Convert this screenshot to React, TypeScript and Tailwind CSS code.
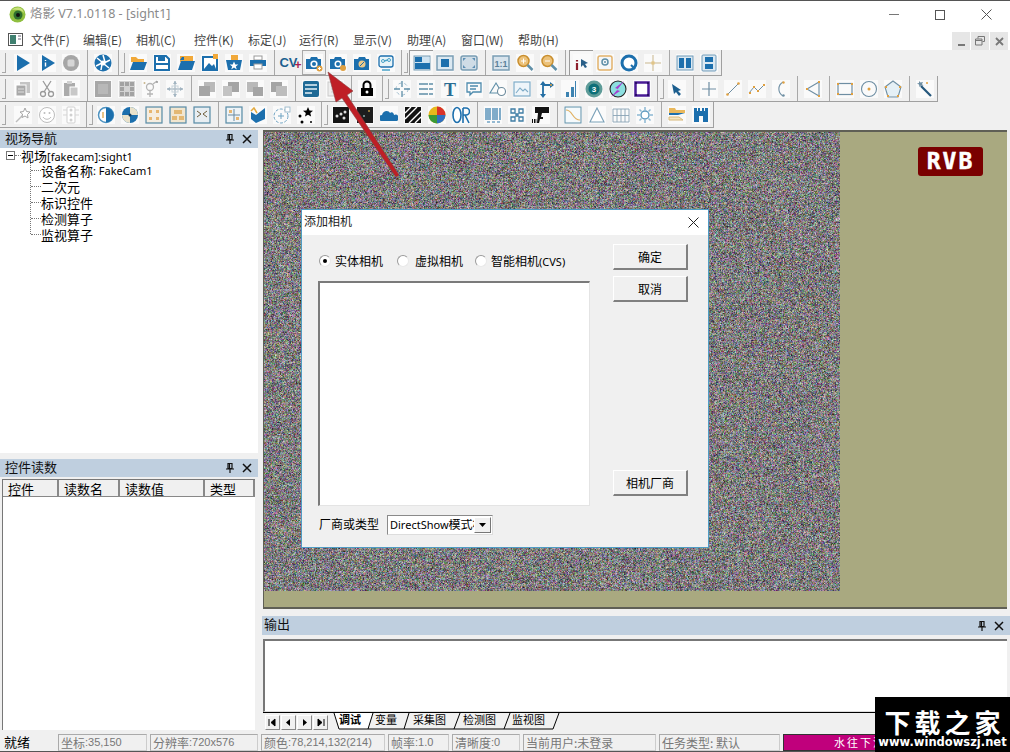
import { useEffect, useRef, type ReactNode } from "react";

const B = "#1c6fad";
const G = "#a6a6a6";
const T = "#5f8fa8";
const O = "#e0a040";

// toolbar glyphs, 18x18 box
const icons: Record<string, ReactNode> = {
  play: <path d="M3 1l13 8-13 8z" fill={B} />,
  step: <><path d="M4 1l13 8-13 8z" fill={B} /><path d="M7.500 6v1M7.500 8.500v4" stroke="#fff" strokeWidth="1.400" /></>,
  stop: <><circle cx="9" cy="9" r="8" fill={G} /><rect x="5.500" y="5.500" width="7" height="7" rx="1.500" fill="#d6d6d6" /></>,
  aperture: <><circle cx="9" cy="9" r="8.500" fill={B} /><path d="M9 1l2 7M16 6l-6 3M15 14l-5-4M7 16l1-6M2 12l6-3M3 4l5 4" stroke="#fff" strokeWidth="1.500" /><circle cx="9" cy="9" r="2.500" fill="#fff" /></>,
  open: <><path d="M2 3h5l2 2h6v3H2z" fill="#f1a93a" /><path d="M1 16l3-8h14l-3 8z" fill={B} /></>,
  save: <><path d="M2 2h11l3 3v11H2z" fill="#fff" stroke={B} strokeWidth="2" /><rect x="5" y="2" width="7" height="5" fill={B} /><rect x="1" y="9" width="15" height="2" fill={B} /></>,
  folder: <><path d="M3 2h13v6H3z" fill="#f1a93a" /><path d="M1 16l3-9h14l-3 9z" fill={B} /><path d="M3 6l2-3h2v3z" fill={B} /></>,
  picture: <><rect x="2" y="3" width="14" height="13" fill="#fff" stroke={B} strokeWidth="2" /><path d="M3 15l5-6 3 3 2-2 2 5z" fill={B} /><rect x="12" y="0" width="5" height="5" fill="#f1a93a" /></>,
  starbox: <><path d="M6 1h7v5H6z" fill="#f1a93a" /><path d="M1 6h16l-2 10H3z" fill={B} /><path d="M9 7.500l1.300 3h3l-2.500 2 1 3-2.800-2-2.800 2 1-3-2.500-2h3z" fill="#fff" /></>,
  print: <><rect x="5" y="2" width="8" height="4" fill="#fff" stroke="#999" /><rect x="1" y="6" width="16" height="6" fill={B} /><rect x="5" y="10" width="8" height="5" fill="#fff" stroke="#999" /></>,
  camplus: <><path d="M1 5h4l1-2h6l1 2h3v10H1z" fill={B} /><circle cx="9" cy="10" r="3.600" fill="#fff" /><circle cx="9" cy="10" r="2" fill={B} /><circle cx="14.500" cy="14.500" r="3" fill={O} /><path d="M13 14.500h3M14.500 13v3" stroke="#fff" /></>,
  camera: <><path d="M1 5h4l1-2h6l1 2h3v10H1z" fill={B} /><circle cx="9" cy="10" r="3.500" fill="#fff" /><circle cx="9" cy="10" r="2" fill={B} /><circle cx="14" cy="14" r="3" fill={O} /></>,
  camera2: <><path d="M1 5h4l1-2h6l1 2h3v11H1z" fill={B} /><circle cx="9" cy="10" r="3.500" fill="#ecc98a" /><path d="M7 12l4-4" stroke={B} /></>,
  camnet: <><rect x="2" y="2" width="14" height="11" rx="2" fill="#e8f4f8" stroke={B} strokeWidth="1.300" /><circle cx="6" cy="7" r="1.500" fill="none" stroke="#4aa3c8" /><circle cx="12" cy="6" r="1.500" fill="none" stroke="#4aa3c8" /><path d="M7 7l4-1M5 16h8" stroke="#4aa3c8" strokeWidth="1.300" /></>,
  layout1: <><rect x="1" y="2" width="16" height="14" fill="#cfe3f1" stroke="#7a9db4" /><path d="M2 8h7V3H2zM2 9h15v6H2z" fill={B} /><rect x="9" y="3" width="7.500" height="5.500" fill="#cfe3f1" /></>,
  layout2: <><rect x="1" y="2" width="16" height="14" fill="#dbe8f1" stroke="#7a9db4" strokeWidth="1.500" /><rect x="5" y="5" width="8" height="8" fill={B} /></>,
  layout3: <><rect x="1" y="2" width="16" height="14" rx="2" fill="#cfdce6" stroke="#7a9db4" strokeWidth="1.500" /><path d="M3 4h3L3 7zM15 4v3l-3-3zM3 14v-3l3 3zM15 14h-3l3-3z" fill="#5d8fb5" /></>,
  one: <><rect x="1" y="2" width="16" height="14" fill="#d7e3ec" stroke="#7a9db4" strokeWidth="1.500" /><text x="9" y="12.500" fontSize="9" fontWeight="700" textAnchor="middle" fill="#5b7f99" fontFamily="Liberation Sans">1:1</text></>,
  zin: <><circle cx="7.500" cy="7" r="5.500" fill="#ecc27a" stroke="#c98f2f" strokeWidth="1.500" /><path d="M5 7h5M7.500 4.500v5" stroke="#fff" /><path d="M11.500 11l5 5" stroke="#5f8fa8" strokeWidth="2.500" /></>,
  zout: <><circle cx="7.500" cy="7" r="5.500" fill="#ecc27a" stroke="#c98f2f" strokeWidth="1.500" /><path d="M5 7h5" stroke="#fff" /><path d="M11.500 11l5 5" stroke="#5f8fa8" strokeWidth="2.500" /></>,
  ipoint: <><path d="M4 6v1.500M4 9v7" stroke="#8e1f2c" strokeWidth="2.200" /><path d="M8 5l7 4-3 1 2 3-2 1-2-3-2 2z" fill="#2a5f88" /></>,
  target: <><rect x="2" y="2" width="14" height="14" rx="2" fill="#f4f7f9" stroke="#e2b26b" strokeWidth="1.500" /><circle cx="9" cy="8" r="3" fill="none" stroke={T} strokeWidth="1.500" /><circle cx="9" cy="8" r="1" fill={T} /></>,
  qcircle: <><circle cx="9" cy="9" r="7" fill="#fff" stroke={B} strokeWidth="3" /><path d="M11 11l4 4" stroke={B} strokeWidth="2" /></>,
  crosshair: <><circle cx="9" cy="9" r="2" fill="#e0c48a" /><path d="M9 1v6M9 11v6M1 9h6M11 9h6" stroke="#c9b78e" /></>,
  split1: <><rect x="1" y="2" width="16" height="14" fill="#dbe8f1" stroke="#6f9ab8" /><path d="M3 4h5v10H3zM10 4h5v10h-5z" fill={B} /></>,
  split2: <><rect x="2" y="1" width="14" height="16" rx="1" fill="#dbe8f1" stroke="#6f9ab8" /><path d="M5 3h8v5H5zM5 10h8v5H5z" fill={B} /></>,
  copy: <><rect x="6" y="2" width="10" height="11" fill="#c4c4c4" /><rect x="2" y="5" width="10" height="11" fill="#a9a9a9" stroke="#fff" /><path d="M4 9h6M4 12h6" stroke="#ddd" /></>,
  cut: <><circle cx="5" cy="14" r="2.500" fill="none" stroke="#9a9a9a" strokeWidth="1.300" /><circle cx="13" cy="14" r="2.500" fill="none" stroke="#9a9a9a" strokeWidth="1.300" /><path d="M6 12l7-11M12 12L5 1" stroke="#9a9a9a" strokeWidth="1.300" /></>,
  paste: <><rect x="2" y="3" width="11" height="13" fill="#ababab" /><rect x="5" y="1" width="5" height="3" fill="#d0d0d0" /><rect x="8" y="7" width="8" height="9" fill="#c8c8c8" stroke="#fff" /></>,
  square: <><rect x="1" y="1" width="16" height="16" fill="#a8a8a8" /><rect x="4" y="4" width="10" height="10" fill="#b8b8b8" /></>,
  dots: <><rect x="1" y="1" width="16" height="16" fill="#d3d3d3" /><path d="M2 2h4v4H2zM7 2h4v4H7zM12 2h4v4h-4zM2 7h4v4H2zM12 7h4v4h-4zM2 12h4v4H2zM7 12h4v4H7zM12 12h4v4h-4z" fill="#a2a2a2" /></>,
  gender: <><circle cx="8" cy="7" r="3.500" fill="none" stroke="#b5b5b5" strokeWidth="1.300" /><path d="M8 11v6M5 14h6M11 4l4-3" stroke="#b5b5b5" strokeWidth="1.300" /><circle cx="2.500" cy="3" r="1" fill="#c9b78e" /><circle cx="15" cy="2" r="1" fill="#999" /></>,
  move: <><path d="M9 1v16M1 9h16" stroke="#adbcc6" strokeWidth="1.300" /><path d="M9 1L7 4h4zM9 17l-2-3h4zM1 9l3-2v4zM17 9l-3-2v4z" fill="#a2b4c1" /><rect x="6" y="6" width="6" height="6" fill="none" stroke="#c8d3da" /></>,
  stack1: <><rect x="6" y="2" width="11" height="10" fill="#b9b9b9" /><rect x="1" y="6" width="11" height="10" fill="#a5a5a5" /></>,
  stack2: <><rect x="6" y="2" width="11" height="10" fill="#a5a5a5" /><rect x="1" y="6" width="9" height="10" fill="#c3c3c3" /></>,
  stack3: <><rect x="1" y="2" width="11" height="10" fill="#b9b9b9" /><rect x="7" y="7" width="10" height="9" fill="#a5a5a5" /></>,
  stack4: <><rect x="1" y="2" width="11" height="10" fill="#a5a5a5" /><rect x="6" y="6" width="11" height="10" fill="#bdbdbd" /></>,
  list: <><rect x="1" y="1" width="16" height="16" rx="2" fill="#1f6a96" /><path d="M3 5h12M3 9h12M3 13h7" stroke="#e8f2f7" strokeWidth="1.300" /></>,
  faint: <><rect x="2" y="2" width="14" height="14" fill="#eee" stroke="#c9c9c9" /><path d="M5 6h8M5 9h8M5 12h8" stroke="#cfcfcf" /></>,
  lock: <><path d="M5.500 8V5a3.500 3.500 0 0 1 7 0v3" fill="none" stroke="#000" strokeWidth="2" /><rect x="3" y="8" width="12" height="8" fill="#000" /><circle cx="9" cy="12" r="1.500" fill="#fff" /></>,
  cross: <><circle cx="9" cy="9" r="6" fill="none" stroke="#9fbccd" strokeDasharray="3 3" /><path d="M9 1v6M9 11v6M1 9h6M11 9h6" stroke={T} strokeWidth="1.300" /></>,
  lines: <path d="M2 4h14M2 9h14M2 14h14" stroke={T} strokeWidth="1.500" strokeDasharray="9 1 4 0" />,
  tee: <text x="9" y="15.500" fontSize="18" fontWeight="700" textAnchor="middle" fill="#2a6c93" fontFamily="Liberation Serif">T</text>,
  comment: <path d="M2 3h14v9H8l-3 3v-3H2zM5 6h8M5 9h6" fill="none" stroke="#4f8cae" strokeWidth="1.300" />,
  shapes: <><path d="M7 3l6 10H1z" fill="none" stroke={T} strokeWidth="1.100" /><circle cx="12.500" cy="11.500" r="4" fill="#fff" stroke="#6c8a9c" strokeWidth="1.100" /></>,
  image: <><rect x="1" y="2" width="16" height="14" fill="#eef5fa" stroke="#7facc8" strokeWidth="1.200" /><path d="M3 13l4-5 3 3 2-2 3 3" fill="none" stroke="#7facc8" strokeWidth="1.100" /></>,
  axes: <><path d="M6 3v13M6 5h10" stroke="#246fa4" strokeWidth="1.800" /><path d="M6 1L3 5h6zM6 18l-3-4h6zM17 5l-4-3v6z" fill="#246fa4" /><circle cx="14" cy="5" r="1" fill={O} /></>,
  bars: <path d="M5 12h3v5H5zM10 7h3v10h-3zM14 1h1v16h-1z" fill="#3d83b1" />,
  teal: <><circle cx="9" cy="9" r="8.500" fill="#5e9b98" /><circle cx="9" cy="9" r="5.500" fill="#0c6f78" /><text x="9" y="12" fontSize="8" fontWeight="700" textAnchor="middle" fill="#fff" fontFamily="Liberation Sans">3</text></>,
  bolt: <><circle cx="9" cy="9" r="8" fill="#8ddfe0" stroke="#222" strokeWidth="1.100" /><path d="M15 1L6 8l3 1-7 8 9-6-3-1z" fill="#a53fd0" /></>,
  purple: <><rect x="2.500" y="2.500" width="13" height="13" fill="#fff" stroke="#4a1b96" strokeWidth="2.500" /><path d="M2 2h2v2H2zM14 2h2v2h-2zM2 14h2v2H2zM14 14h2v2h-2z" fill="#2a0d66" /></>,
  pointer: <path d="M4 4l9 6-3 1 3 3-2 2-3-4-2 2z" fill="#1d5f8f" />,
  plus: <path d="M9 2v14M2 9h14" stroke="#6e8ea3" strokeWidth="1.200" />,
  line: <><path d="M3 15L15 3" stroke="#6e8ea3" /><circle cx="3.500" cy="14.500" r="1.300" fill={O} /><circle cx="14.500" cy="3.500" r="1.300" fill={O} /></>,
  poly: <><path d="M1 13l5-6 4 4 6-6" fill="none" stroke="#6e8ea3" /><path d="M1 12h2v2H1zM5 6h2v2H5zM9 10h2v2H9zM15 4h2v2h-2z" fill={O} /></>,
  arc: <><path d="M11 2a8 8 0 0 0 0 14" fill="none" stroke="#6e8ea3" strokeWidth="1.100" /><circle cx="11.500" cy="2.500" r="1.200" fill={O} /><circle cx="11.500" cy="15.500" r="1.200" fill="#6e8ea3" /></>,
  fan: <><path d="M15 2v14L3 9z" fill="none" stroke="#6e8ea3" strokeWidth="1.100" /><path d="M2 8h2v2H2zM14 1h2v2h-2zM14 15h2v2h-2z" fill={O} /></>,
  rect: <><rect x="2" y="3.500" width="14" height="11" fill="none" stroke="#6e8ea3" strokeWidth="1.200" /><path d="M1 3h2v2H1zM15 3h2v2h-2zM1 13h2v2H1zM15 13h2v2h-2z" fill={O} /></>,
  circle: <><circle cx="9" cy="9" r="7.500" fill="none" stroke="#6e8ea3" strokeWidth="1.100" /><circle cx="9" cy="9" r="1.500" fill={O} /></>,
  penta: <><path d="M9 1l8 6-3 10H4L1 7z" fill="#e5f0f6" stroke="#6e8ea3" strokeWidth="1.100" /><path d="M1 6h2v2H1zM15 6h2v2h-2zM3 15h2v2H3zM13 15h2v2h-2z" fill={O} /></>,
  wand: <><path d="M5 6l10 10" stroke="#25577c" strokeWidth="2.200" /><path d="M3 1l1.500 1.500L7 2 6 4l1.500 2-2.500-.5L3.500 7 3 4.500 1 3.500 3 3z" fill="#6e8ea3" /><circle cx="11" cy="3" r="1" fill={O} /></>,
  shoot: <><path d="M2 16l7-7" stroke="#bdbdbd" strokeWidth="1.400" /><path d="M11 2l1.500 3.500L16 6l-2.500 2.500.5 3.500-3-2-3 1.500.5-3.500L6 6l3.500-.5z" fill="#fff" stroke="#a5a5a5" /></>,
  smile: <><circle cx="9" cy="9" r="7.500" fill="#fff" stroke="#bdbdbd" /><circle cx="6.500" cy="7" r="1" fill="#bdbdbd" /><circle cx="11.500" cy="7" r="1" fill="#bdbdbd" /><path d="M5 11c2 3 6 3 8 0" fill="none" stroke="#bdbdbd" /></>,
  traffic: <><rect x="5" y="1" width="8" height="16" rx="1" fill="#fff" stroke="#cfcfcf" /><circle cx="9" cy="4" r="1.500" fill="#d0d0d0" /><circle cx="9" cy="9" r="1.500" fill="#d0d0d0" /><circle cx="9" cy="14" r="1.500" fill="#d0d0d0" /><path d="M1 4h4M1 9h4M13 4h4M13 9h4" stroke="#d5d5d5" /></>,
  half: <><circle cx="9" cy="9" r="7.500" fill="#fff" stroke="#4d92c0" strokeWidth="1.500" /><path d="M9 1.500a7.500 7.500 0 0 1 0 15z" fill={B} /><path d="M6 6v6" stroke="#e0b060" strokeWidth="1.500" /></>,
  quad: <><circle cx="9" cy="9" r="8" fill={B} /><path d="M9 1a8 8 0 0 1 8 8H9zM9 17a8 8 0 0 1-8-8h8z" fill="#e9e2cb" /><circle cx="9" cy="9" r="1.500" fill="#163f60" /></>,
  tile1: <><rect x="1" y="1" width="16" height="16" fill="#f5ede0" stroke="#5f8fa8" strokeWidth="1.300" /><path d="M4 4h3v3H4zM11 4h3v3h-3zM4 11h3v3H4zM11 11h3v3h-3z" fill="#e7b670" /></>,
  tile2: <><rect x="1" y="1" width="16" height="16" fill="#f2e6cf" stroke="#5f8fa8" strokeWidth="1.300" /><path d="M5 4h8v4H5zM3 10h5v4H3zM10 10h5v4h-5z" fill="#e3b873" /></>,
  tile3: <><rect x="1" y="1" width="16" height="16" fill="#e8eef2" stroke="#5f8fa8" strokeWidth="1.300" /><path d="M4 5l4 3-4 3M14 5l-4 3 4 3" fill="none" stroke="#6d5c3a" /></>,
  tile4: <><rect x="1" y="1" width="16" height="16" fill="#eef3f6" stroke="#5f8fa8" strokeWidth="1.300" /><path d="M9 3v12M3 9h12" stroke="#6a8ba1" /><path d="M4 4h3v3H4zM11 11h3v3h-3z" fill="#e7b670" /></>,
  fold: <><path d="M2 6l5 3 9-7v11l-9 4-5-4z" fill={B} /><path d="M2 5l3-3 3 5" fill="none" stroke="#e2a93f" strokeWidth="1.500" /></>,
  orbit: <><circle cx="8" cy="10" r="7" fill="none" stroke="#6fa3c2" strokeDasharray="3 1.500" /><path d="M8 7v6M5 10h6" stroke="#6fa3c2" /><rect x="12" y="1" width="5" height="5" fill="#fff" stroke="#9db9ca" /></>,
  stars: <><path d="M11 1l1.500 3.500 3.500.3-2.700 2.300.8 3.400-3.100-1.800-3 1.800.8-3.400L6 4.800l3.500-.3z" fill="#000" /><circle cx="3" cy="10" r="1.500" fill="#000" /><circle cx="5" cy="16" r="1.500" fill="#000" /><circle cx="14" cy="16" r="1" fill="#000" /></>,
  dark1: <><rect x="1" y="1" width="16" height="16" fill="#141414" /><circle cx="5" cy="10" r="1.500" fill="#ddd" /><circle cx="9" cy="8" r="1.500" fill="#ddd" /><circle cx="13" cy="6" r="1.500" fill="#ddd" /><circle cx="12" cy="12" r="1.500" fill="#ddd" /></>,
  dark2: <><rect x="1" y="1" width="16" height="16" fill="#1d1d1d" /><circle cx="13" cy="5" r="1" fill="#b7953f" /><circle cx="8" cy="10" r="1" fill="#8aa" /></>,
  cloud: <path d="M2 15a3 3 0 0 1 0-6c1-5 7-5 8-2 2-2 4 0 4 2a3 3 0 0 1 3 6z" fill={B} />,
  hatch: <><rect x="1" y="1" width="16" height="16" fill="#111" /><path d="M1 7l6-6M1 13L13 1M5 17L17 5M11 17l6-6" stroke="#fff" strokeWidth="1.400" /></>,
  pie: <><circle cx="9" cy="9" r="8.500" fill="#e6b81d" /><path d="M9 9V.5A8.500 8.500 0 0 1 17.500 9z" fill="#d8322a" /><path d="M9 9h8.500A8.500 8.500 0 0 1 9 17.500z" fill="#2f6fc0" /><path d="M9 9v8.500A8.500 8.500 0 0 1 .5 9z" fill="#3b9a35" /></>,
  orand: <><ellipse cx="5" cy="9" rx="4" ry="7.500" fill="#fff" stroke={B} strokeWidth="1.600" /><path d="M11 2v15M11 2h3a3 3 0 0 1 0 7h-3M13 9l4 8" fill="none" stroke={B} strokeWidth="1.600" /></>,
  barcode: <path d="M2 2v12M4 2v12M6 2v12M9 2v12M11 2v12M13 2v12M16 2v12M3 16h3M8 16h3M13 16h3" stroke="#2f78a9" strokeWidth="1.200" />,
  qr: <path d="M3 3h4v4H3zM11 3h4v4h-4zM3 11h4v4H3zM11 11h4v4h-4zM8 8h2v2H8z" fill="none" stroke="#3f7da5" strokeWidth="1.300" />,
  scanner: <><path d="M3 1h14v6H10l-1 4h2v2H8l-1 4H5l1-10H3z" fill="#111" /><path d="M0 13h1v4H0zM2 13h1v4H2zM3.500 13h.8v4h-.8z" fill="#111" /></>,
  curve: <><rect x="1" y="1" width="16" height="16" fill="#f5fafc" stroke="#5f8fa8" /><path d="M2 4c7 0 6 10 14 10" fill="none" stroke="#e0b060" strokeWidth="1.200" /></>,
  tri: <path d="M9 2l7 14H2z" fill="#fff" stroke="#7aa1b8" strokeWidth="1.100" />,
  gridz: <path d="M1 3h16v13H1zM1 9.500h16M5 3v13M9 3v13M13 3v13" fill="none" stroke="#8aa4b6" strokeWidth=".9" />,
  gear: <><circle cx="9" cy="9" r="4" fill="#fff" stroke="#5f9bc0" strokeWidth="1.400" /><path d="M9 1v3M9 14v3M1 9h3M14 9h3M3.500 3.500l2 2M12.500 12.500l2 2M14.500 3.500l-2 2M5.500 12.500l-2 2" stroke="#8cb8d2" strokeWidth="1.500" /></>,
  ruler: <><path d="M1 2h6l1 2h9v3H1z" fill="#e9b85c" /><path d="M1 7h16l-7 2H1z" fill={B} /><path d="M1 11h10l4 3H1z" fill="#f4e5c2" stroke="#d8b878" /></>,
  castle: <path d="M2 2h3v3h1V2h2v3h2V2h2v3h1V2h3v14H2zM7 10h4v6H7z" fill={B} fillRule="evenodd" />,
};

const row1 = ["play", "step", "stop", "sep", "aperture", "grip", "open", "save", "folder", "picture", "starbox", "print", "sep", "cv", "camplus", "camera", "camera2", "camnet", "grip", "layout1", "layout2", "layout3", "sep", "one", "zin", "zout", "sep", "ipoint", "target", "qcircle", "crosshair", "sep", "split1", "split2"];
const row2 = ["copy", "cut", "paste", "sep", "square", "dots", "gender", "move", "sep", "stack1", "stack2", "stack3", "stack4", "sep", "list", "faint", "sep", "lock", "grip", "cross", "lines", "tee", "comment", "shapes", "image", "axes", "bars", "teal", "bolt", "purple", "grip", "pointer", "sep", "plus", "line", "poly", "arc", "sep", "fan", "sep", "rect", "circle", "penta", "sep", "wand"];
const row3 = ["shoot", "smile", "traffic", "grip", "half", "quad", "tile1", "tile2", "tile3", "sep", "tile4", "fold", "orbit", "stars", "grip", "dark1", "dark2", "cloud", "hatch", "pie", "orand", "sep", "barcode", "qr", "scanner", "sep", "curve", "tri", "gridz", "gear", "sep", "ruler", "castle"];

const menus = [
  ["文件(F)", "w-[52px]"],
  ["编辑(E)", "w-[53px]"],
  ["相机(C)", "w-[58px]"],
  ["控件(K)", "w-[54px]"],
  ["标定(J)", "w-[51px]"],
  ["运行(R)", "w-[54px]"],
  ["显示(V)", "w-[54px]"],
  ["助理(A)", "w-[54px]"],
  ["窗口(W)", "w-[57px]"],
  ["帮助(H)", "w-[50px]"],
];

const Grip = () => (
  <div className="w-[4px] h-[20px] border-r border-b border-[#a8a8a8] shrink-0" />
);

const ToolBar = ({ items }: { items: string[] }) => (
  <div className="flex items-center h-[26px] pl-[2px] border-b border-r border-[#a0a0a0] w-fit">
    <div className="w-[9px] shrink-0"><Grip /></div>
    {items.map((it, i) => {
      if (it === "sep") {
        return (
          <div key={i} className="w-2 h-full flex justify-center shrink-0">
            <div className="w-px h-full bg-[#a8a8a8]" />
          </div>
        );
      }
      if (it === "grip") {
        return (
          <div key={i} className="w-[11px] h-full flex items-center gap-[2px] pl-[3px] shrink-0">
            <div className="w-px h-full bg-[#a8a8a8]" />
            <Grip />
          </div>
        );
      }
      const pressed = it === "layout1" || it === "ipoint";
      const hover = it === "camplus";
      return (
        <div
          key={i}
          className={`w-6 h-full flex items-center justify-center shrink-0 ${
            pressed ? "border-l border-t border-[#9a9a9a] bg-[#f7f7f7]" : ""
          } ${hover ? "border border-[#a8a8a8]" : ""}`}
        >
          {it === "cv" ? (
            <span className="relative text-[13px] leading-none font-['Liberation_Sans',sans-serif] font-bold text-[#1c5f8f] -ml-[3px]">
              CV
              <span className="absolute -right-[4px] -bottom-[2px] text-[12px] leading-none text-[#a81e4e]">+</span>
            </span>
          ) : (
            <svg className="bg-[#fafafa]" width="18" height="18" viewBox="0 0 18 18">{icons[it]}</svg>
          )}
        </div>
      );
    })}
  </div>
);

const PanelHeader = ({ title, textClass }: { title: string; textClass?: string }) => (
  <div className={`flex items-center justify-between bg-[#bfcfdf] text-[13px] text-[#111] pl-[5px] pr-[6px] ${textClass ?? ""}`}>
    <span className="leading-none pb-[4px]">{title}</span>
    <div className="flex items-center gap-[8px]">
      <svg width="8" height="10" viewBox="0 0 8 10">
        <path d="M2 .5h4v5H2zM3.500.5v5M0 6h8M4 6v4" fill="none" stroke="#111" strokeWidth="1.200" />
      </svg>
      <svg width="10" height="10" viewBox="0 0 10 10">
        <path d="M1 1l8 8M9 1L1 9" stroke="#111" strokeWidth="1.500" />
      </svg>
    </div>
  </div>
);

const NoiseView = () => {
  const ref = useRef<HTMLCanvasElement>(null);
  useEffect(() => {
    const ctx = ref.current?.getContext("2d");
    if (!ctx) return;
    const img = ctx.createImageData(720, 576);
    let seed = 12345;
    const rnd = () => {
      seed = (seed * 1664525 + 1013904223) >>> 0;
      return (seed >>> 16) & 255;
    };
    for (let i = 0; i < img.data.length; i += 4) {
      const luma = (rnd() - 128) * 0.5;
      img.data[i] = 126 + luma + (rnd() - 128) * 0.45;
      img.data[i + 1] = 124 + luma + (rnd() - 128) * 0.45;
      img.data[i + 2] = 126 + luma + (rnd() - 128) * 0.45;
      img.data[i + 3] = 255;
    }
    ctx.putImageData(img, 0, 0);
  }, []);
  return <canvas ref={ref} width={720} height={576} className="block w-[576px] h-[459px] blur-[0.5px]" />;
};

const Radio = ({ label, checked, w, gap }: { label: ReactNode; checked?: boolean; w: string; gap: string }) => (
  <div className={`flex items-center ${gap} ${w}`}>
    <span className="w-[12px] h-[12px] rounded-full border border-[#9a9a9a] border-r-[#e8e8e8] border-b-[#e8e8e8] bg-white flex items-center justify-center shrink-0">
      {checked && <span className="w-[4px] h-[4px] rounded-full bg-black" />}
    </span>
    <span className="leading-none whitespace-nowrap">{label}</span>
  </div>
);

const DlgButton = ({ label, primary }: { label: string; primary?: boolean }) => (
  <div
    className={`w-[75px] h-[26px] flex items-center justify-center text-[12px] border border-t-white border-l-white border-r-[#808080] border-b-[#808080] border-b-2 border-r-2 ${
      primary ? "border-t-[#7a7a7a] border-l-[#7a7a7a] border-b-[#555] border-r-[#555]" : ""
    }`}
  >
    {label}
  </div>
);

const statusCells = [
  ["坐标", ":35,150", "w-[89px]"],
  ["分辨率", ":720x576", "w-[108px]"],
  ["颜色", ":78,214,132(214)", "w-[124px]"],
  ["帧率", ":1.0", "w-[61px]"],
  ["清晰度", ":0", "w-[68px]"],
  ["当前用户:未登录", "", "w-[133px]"],
  ["任务类型: 默认", "", "w-[121px]"],
];

const tabs = [
  ["调试", 4],
  ["变量", 40],
  ["采集图", 78],
  ["检测图", 128],
  ["监视图", 177],
] as const;

export default function App() {
  return (
    <div className="relative w-[1010px] h-[752px] overflow-hidden flex flex-col bg-[#f0f0f0] text-black font-['Noto_Sans_CJK_SC','Noto_Sans',sans-serif]">
      {/* title bar */}
      <div className="h-[28px] bg-white border-t border-[#555] flex items-center shrink-0">
        <svg className="ml-[9px]" width="17" height="17" viewBox="0 0 17 17">
          <circle cx="8.500" cy="8.500" r="8" fill="#8fbf3f" />
          <path d="M3 4c4-4 11-3 12 3-2-3-8-4-12-3z" fill="#c8e07a" />
          <circle cx="9" cy="9" r="4.500" fill="#2f6f2f" />
          <circle cx="9" cy="9" r="2" fill="#111" />
        </svg>
        <span className="ml-[4px] text-[12.500px] leading-none text-[#8a8a8a] font-['Noto_Sans','Noto_Sans_CJK_SC',sans-serif]">
          烙影 V7.1.0118 - [sight1]
        </span>
        <div className="ml-auto flex pr-[1px]">
          <div className="w-[46px] h-[27px] flex items-center justify-center">
            <div className="w-[10px] h-px bg-[#777]" />
          </div>
          <div className="w-[46px] h-[27px] flex items-center justify-center">
            <div className="w-[10px] h-[10px] border border-[#555]" />
          </div>
          <div className="w-[46px] h-[27px] flex items-center justify-center">
            <svg width="11" height="11" viewBox="0 0 11 11">
              <path d="M.5.5l10 10M10.500.5l-10 10" stroke="#555" />
            </svg>
          </div>
        </div>
      </div>

      {/* menu bar */}
      <div className="h-[22px] bg-white flex items-center shrink-0">
        <svg className="ml-[8px]" width="15" height="13" viewBox="0 0 15 13">
          <rect x=".5" y=".5" width="14" height="12" fill="#fff" stroke="#555" />
          <rect x="2" y="2" width="6" height="9" fill="#3f7f6f" />
          <path d="M10 3h3M10 6h3" stroke="#667" />
        </svg>
        <div className="ml-[8px] flex text-[12px] text-[#444] pt-[2px]">
          {menus.map(([m, w]) => (
            <span key={m} className={`${w} leading-none`}>{m}</span>
          ))}
        </div>
        <div className="ml-auto mr-[2px] flex gap-px self-end">
          <div className="w-[18px] h-[18px] bg-[#e6e6e6] flex items-end justify-center pb-[4px]">
            <div className="w-[7px] h-[2px] bg-[#777]" />
          </div>
          <div className="w-[18px] h-[18px] bg-[#e6e6e6] flex items-center justify-center">
            <svg width="10" height="10" viewBox="0 0 10 10">
              <path d="M3 2.500V.5h6.500v5H7.500M.5 3h6.500v6H.5zM.5 4.500h6.500" fill="none" stroke="#777" />
            </svg>
          </div>
          <div className="w-[18px] h-[18px] bg-[#e6e6e6] flex items-center justify-center">
            <svg width="9" height="9" viewBox="0 0 9 9">
              <path d="M1 1l7 7M8 1L1 8" stroke="#777" strokeWidth="1.800" />
            </svg>
          </div>
        </div>
      </div>

      {/* tool bars */}
      <div className="flex flex-col shrink-0">
        <ToolBar items={row1} />
        <ToolBar items={row2} />
        <ToolBar items={row3} />
      </div>

      {/* work area */}
      <div className="flex-1 min-h-0 flex pt-[2px]">
        {/* left dock */}
        <div className="w-[258px] shrink-0 flex flex-col">
          <PanelHeader title="视场导航" textClass="h-[18px] shrink-0" />
          <div className="h-[305px] bg-white text-[13px] shrink-0">
            <div className="flex items-center h-[14px] pl-[6px]">
              <span className="w-[9px] h-[9px] border border-[#777] flex items-center justify-center shrink-0">
                <span className="w-[5px] h-px bg-black" />
              </span>
              <span className="w-[6px] border-t border-dotted border-[#777]" />
              <span className="leading-none">
                视场<span className="text-[11px] font-['Noto_Sans',sans-serif]">[fakecam]:sight1</span>
              </span>
            </div>
            <div className="ml-[30px] border-l border-dotted border-[#777] h-[72px]">
              {["设备名称", "二次元", "标识控件", "检测算子", "监视算子"].map((t, i) => (
                <div key={t} className="flex items-center h-[16px]">
                  <span className="w-[10px] border-t border-dotted border-[#777]" />
                  <span className="leading-none">{t}</span>
                  {i === 0 && (
                    <span className="text-[11px] leading-none font-['Noto_Sans',sans-serif]">: FakeCam1</span>
                  )}
                </div>
              ))}
            </div>
          </div>
          <div className="h-[6px] shrink-0" />
          <PanelHeader title="控件读数" textClass="h-[18px] shrink-0" />
          <div className="flex-1 min-h-0 mt-[2px] mb-[2px] ml-[2px] mr-[3px] bg-white border-l border-[#777] flex flex-col">
            <div className="flex h-[18px] text-[13px] bg-[#f0f0f0] border-t border-[#777] shrink-0">
              {[
                ["控件", "w-[56px]"],
                ["读数名", "w-[61px]"],
                ["读数值", "w-[85px]"],
                ["类型", "flex-1"],
              ].map(([t, w]) => (
                <div key={t} className={`${w} pl-[5px] flex items-center leading-none border-r-2 border-b border-[#888]`}>
                  {t}
                </div>
              ))}
            </div>
          </div>
        </div>

        {/* center */}
        <div className="flex-1 min-w-0 flex flex-col pl-[5px]">
          <div className="h-[479px] shrink-0 mr-[3px] bg-[#a9a980] border-t-2 border-l border-b-2 border-[#5f5f55] relative overflow-hidden">
            <NoiseView />
            <div className="absolute left-[654px] top-[15px] w-[65px] h-[29px] rounded-[3px] bg-[#7a0000] flex items-center justify-center text-white font-bold text-[23px] leading-none tracking-[2px] [-webkit-text-stroke:0.5px_white] font-['DejaVu_Sans_Mono',monospace]">
              RVB
            </div>
          </div>
          <div className="h-[7px] shrink-0" />
          <PanelHeader title="输出" textClass="h-[19px] shrink-0 -ml-px !pl-[2px]" />
          <div className="h-[4px] shrink-0" />
          <div className="h-[73px] shrink-0 mr-[3px] bg-white border-t-2 border-l-2 border-[#777] border-b border-b-[#ddd]" />
          <div className="relative flex-1 min-h-0 border-t border-black flex items-start pt-[2px] pl-[2px]">
            {[0, 1, 2, 3].map((b) => (
              <div key={b} className="w-[15px] h-[15px] mr-px border border-white border-r-[#888] border-b-[#888] flex items-center justify-center">
                <svg width="9" height="9" viewBox="0 0 9 9">
                  {b === 0 && <path d="M1 1v7M7 1L3 4.500 7 8z" stroke="#000" />}
                  {b === 1 && <path d="M6 1L2 4.500 6 8z" />}
                  {b === 2 && <path d="M3 1l4 3.500L3 8z" />}
                  {b === 3 && <path d="M8 1v7M2 1l4 3.500L2 8z" stroke="#000" />}
                </svg>
              </div>
            ))}
            <svg className="absolute left-[66px] top-0" width="240" height="18" viewBox="0 0 240 18">
              <path d="M5 0l5 16h29l5-16z" fill="#fff" />
              <path d="M5 0l5 16h29l5-16M39 16h36l5-16M75 16h50l6-16M125 16h50l6-16M175 16h49l6-16" fill="none" stroke="#000" />
            </svg>
            {tabs.map(([t, x], i) => (
              <span
                key={t}
                style={{ left: 72 + x }}
                className={`absolute top-px text-[11px] leading-none whitespace-nowrap ${i === 0 ? "font-bold" : ""}`}
              >
                {t}
              </span>
            ))}
          </div>
        </div>
      </div>

      {/* status bar */}
      <div className="h-[20px] flex items-stretch shrink-0 border-b border-[#555] text-[12px] text-[#777] pt-[2px]">
        <div className="w-[58px] pl-[4px] flex items-center text-[13px] text-black leading-none pb-[3px]">就绪</div>
        {statusCells.map(([t, n, w]) => (
          <div key={t} className={`${w} mr-[3px] pl-[2px] flex items-center whitespace-nowrap overflow-hidden leading-none border border-[#aaa] border-r-[#ccc] border-b-[#ccc]`}>
            {t}
            {n && <span className="text-[11px] font-['Liberation_Sans',sans-serif]">{n}</span>}
          </div>
        ))}
        <div className="flex-1 bg-[#c0007c] text-white text-[11px] pl-[50px] flex items-center tracking-[2px] border border-[#333]">
          水往下流
        </div>
      </div>

      {/* dialog */}
      <div className="absolute left-[301px] top-[209px] w-[408px] h-[339px] border border-[#4f9cc4] bg-[#f0f0f0] flex flex-col text-[12px]">
        <div className="h-[25px] bg-white flex items-center justify-between pl-[2px] pr-[9px] shrink-0">
          <span className="leading-none text-[#222] pb-[4px]">添加相机</span>
          <svg width="11" height="11" viewBox="0 0 11 11">
            <path d="M.5.5l10 10M10.500.5l-10 10" stroke="#222" />
          </svg>
        </div>
        <div className="flex-1 flex pl-[16px] pr-[20px] pt-[9px]">
          <div className="w-[272px] flex flex-col">
            <div className="flex items-center h-[18px] mt-[8px] ml-px">
              <Radio checked label="实体相机" w="w-[78px]" gap="gap-[4px]" />
              <Radio label="虚拟相机" w="w-[78px]" gap="gap-[6px]" />
              <Radio
                label={<>智能相机<span className="text-[11px] font-['Noto_Sans',sans-serif]">(CVS)</span></>}
                w="w-[100px]"
                gap="gap-[4px]"
              />
            </div>
            <div className="h-[225px] mt-[11px] bg-white border border-[#7a7a7a] border-r-[#e4e4e4] border-b-[#e4e4e4] border-t-2 border-l-2" />
            <div className="flex items-center mt-[9px] ml-px">
              <span className="w-[68px] leading-none pb-[3px]">厂商或类型</span>
              <div className="w-[106px] h-[20px] bg-white border border-[#8a8a8a] border-r-[#ddd] border-b-[#ddd] flex items-center">
                <span className="w-[86px] overflow-hidden whitespace-nowrap pl-[2px] leading-none text-[11px] font-['Noto_Sans','Noto_Sans_CJK_SC',sans-serif]">
                  DirectShow<span className="text-[12px]">模式相机</span>
                </span>
                <span className="w-[17px] h-[16px] bg-[#f0f0f0] border border-white border-r-[#777] border-b-[#777] flex items-center justify-center">
                  <svg width="7" height="4" viewBox="0 0 7 4"><path d="M0 0h7L3.500 4z" fill="#000" /></svg>
                </span>
              </div>
            </div>
          </div>
          <div className="ml-[23px] flex flex-col">
            <DlgButton primary label="确定" />
            <div className="mt-[6px]"><DlgButton label="取消" /></div>
            <div className="mt-[168px]"><DlgButton label="相机厂商" /></div>
          </div>
        </div>
      </div>

      {/* red annotation arrow */}
      <svg className="absolute left-0 top-0 pointer-events-none" width="1010" height="752">
        <path d="M328 72L353 91l-6 4L399 175l-3 2L342 98l-6 4z" fill="#bf1f26" stroke="#8a3a3a" strokeWidth=".6" />
      </svg>

      {/* site watermark */}
      <div className="absolute right-0 bottom-0 w-[135px] h-[55px] bg-black text-white flex flex-col items-center justify-end">
        <span className="text-[26px] leading-none tracking-[4px] font-bold mb-[2px] ml-[4px]">下载之家</span>
        <span className="text-[11.500px] leading-none font-bold font-['DejaVu_Sans',sans-serif] mb-[4px]">www.windowszj.net</span>
      </div>
    </div>
  );
}
